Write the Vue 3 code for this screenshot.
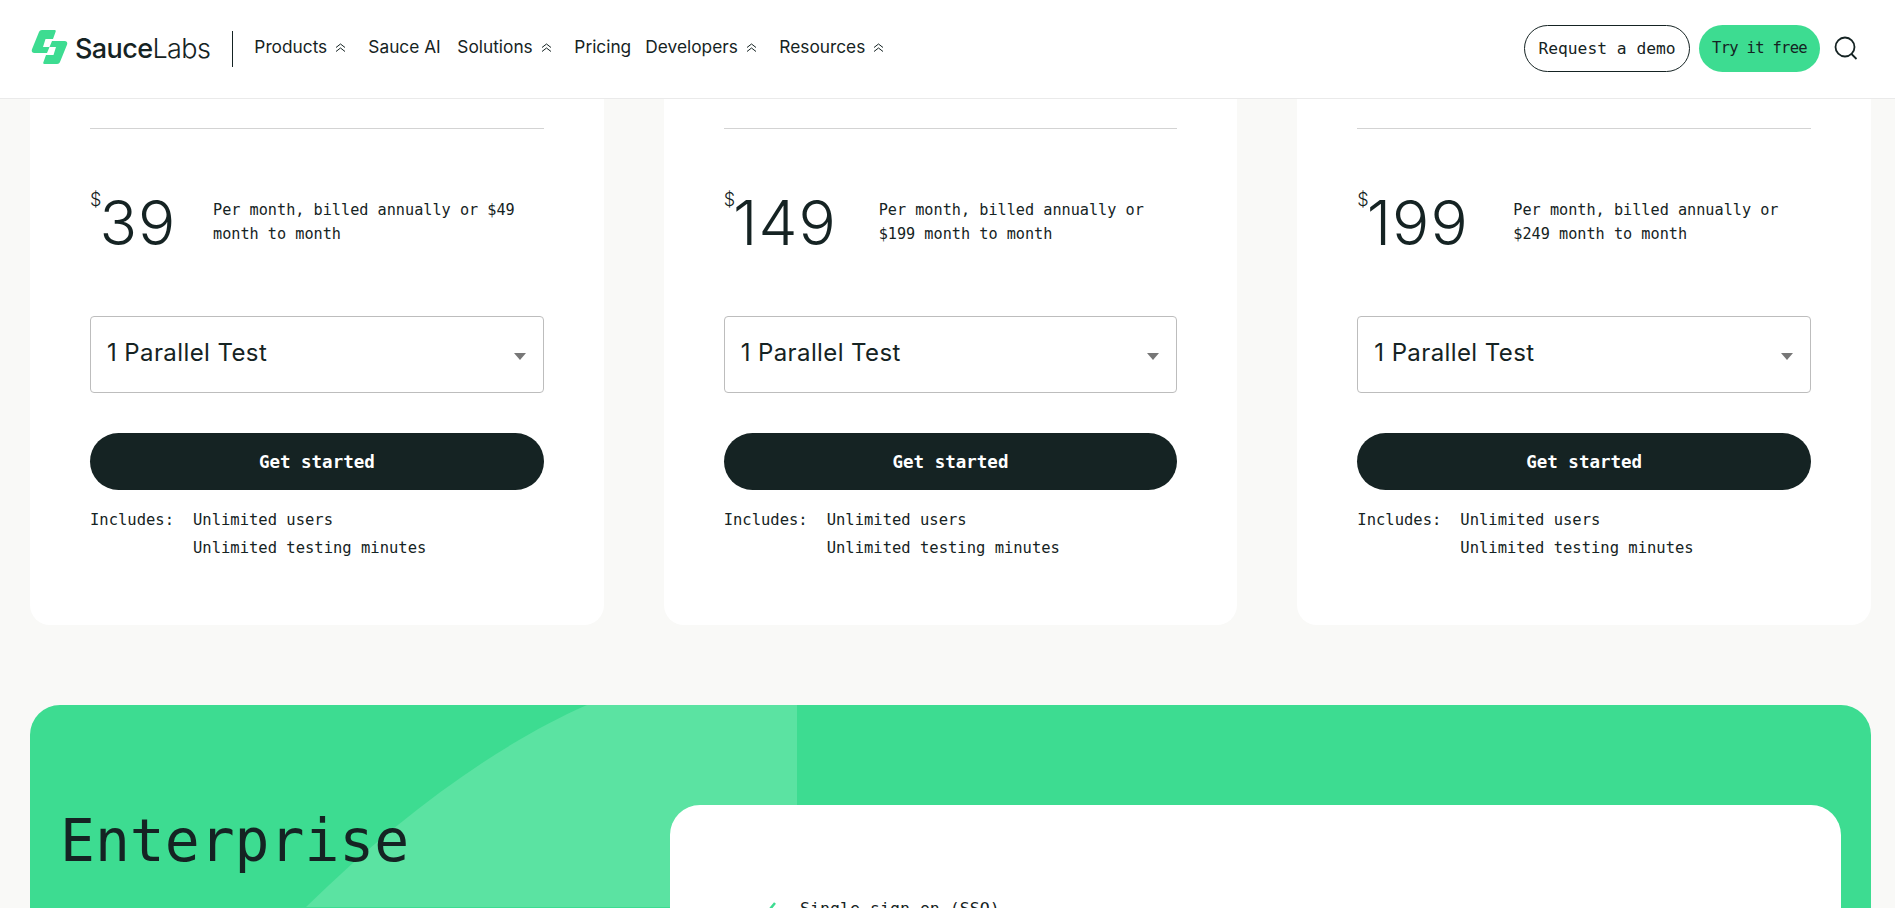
<template>
  <div class="page">
    <header class="topbar">
      <div class="brand">
        <svg class="logo" width="37" height="36" viewBox="0 0 36 36">
          <path d="M10.500 1H23c1 0 1.500.6 1.200 1.500L21.500 10H14l-2.500 8H18l-2.500 6H3C.8 24-.3 22.500.4 20.500L7.500 3C8 1.800 9 1 10.500 1z" fill="#3ddc91"/>
          <path d="M25.500 35H13c-1 0-1.500-.6-1.200-1.500L14.500 26H22l2.500-8H18l2.500-6H33c2.200 0 3.300 1.500 2.600 3.500L28.500 33c-.5 1.200-1.500 2-3 2z" fill="#3ddc91"/>
        </svg>
        <span class="wordmark"><b>Sauce</b>Labs</span>
      </div>
      <nav class="nav">
        <a v-for="item in navItems" :key="item.label" class="nav-item" :class="item.cls">
          {{ item.label }}
          <svg v-if="item.menu" width="11" height="11" viewBox="0 0 11 11" fill="none" stroke="#152323" stroke-width="1">
            <path d="M1 5.500 5.500 2 10 5.500M1 9.500 5.500 6l4.500 3.500"/>
          </svg>
        </a>
      </nav>
      <div class="actions">
        <a class="pill outline">Request a demo</a>
        <a class="pill green">Try it free</a>
        <svg class="search" width="24" height="24" viewBox="0 0 24 24" fill="none" stroke="#152323" stroke-width="1.800">
          <circle cx="11" cy="11" r="9.500"/>
          <path d="m17.500 18 5 5"/>
        </svg>
      </div>
    </header>

    <main class="content">
      <section class="plans">
        <article v-for="plan in plans" :key="plan.price" class="plan">
          <div class="rule"></div>
          <div class="price-row">
            <div class="price" :style="{ width: plan.priceWidth + 'px' }"><sup>$</sup><span>{{ plan.price }}</span></div>
            <p>{{ plan.note }}</p>
          </div>
          <div class="select">
            <span>1 Parallel Test</span>
            <i class="caret"></i>
          </div>
          <button class="start">Get started</button>
          <div class="includes">
            <span>Includes:</span>
            <ul>
              <li>Unlimited users</li>
              <li>Unlimited testing minutes</li>
            </ul>
          </div>
        </article>
      </section>

      <section class="enterprise">
        <svg class="swoosh" width="768" height="202" viewBox="0 0 768 202">
          <path d="M557 0C470 38 370 110 276 202H767V0z" fill="#5be3a2"/>
        </svg>
        <h2>Enterprise</h2>
        <div class="ent-card">
          <div class="ent-line">
            <svg width="18" height="18" viewBox="0 0 18 18" fill="none" stroke="#3ddc91" stroke-width="2.500"><path d="m2 9 5 5 9-11"/></svg>
            Single sign-on (SSO)
          </div>
        </div>
      </section>
    </main>
  </div>
</template>

<script setup>
const navItems = [
  { label: 'Products', menu: true, cls: 'w-products' },
  { label: 'Sauce AI', menu: false, cls: 'w-ai' },
  { label: 'Solutions', menu: true, cls: 'w-solutions' },
  { label: 'Pricing', menu: false, cls: 'w-pricing' },
  { label: 'Developers', menu: true, cls: 'w-developers' },
  { label: 'Resources', menu: true, cls: 'w-resources' }
]
const plans = [
  { price: '39', priceWidth: 123, note: 'Per month, billed annually or $49 month to month' },
  { price: '149', priceWidth: 155, note: 'Per month, billed annually or $199 month to month' },
  { price: '199', priceWidth: 156, note: 'Per month, billed annually or $249 month to month' }
]
</script>

<style>
html, body { margin: 0; height: 100%; overflow: hidden; background: #f9f9f7; }
</style>

<style scoped>
.page {
  height: 908px;
  overflow: hidden;
  background: #f9f9f7;
  color: #152323;
  font-family: Inter, "Liberation Sans", sans-serif;
}
.topbar {
  height: 98px;
  background: #fff;
  border-bottom: 1px solid #eaeaea;
  display: flex;
  align-items: center;
  padding: 0 30px 0 31px;
}
.brand {
  display: flex;
  align-items: center;
  gap: 7px;
  height: 36px;
  padding-right: 22px;
  border-right: 1px solid #152323;
  margin-top: -1px;
}
.logo { margin-top: -3px; }
.wordmark { font-size: 27px; font-weight: 300; letter-spacing: -0.6px; }
.wordmark b { font-weight: 500; }
.nav { display: flex; align-items: center; margin-left: 21px; margin-top: -6px; }
.nav-item { font-size: 17.300px; display: flex; align-items: center; gap: 8px; white-space: nowrap; }
.nav-item svg { margin-top: 3px; }
.w-products { width: 114px; }
.w-ai { width: 89px; }
.w-solutions { width: 117px; }
.w-pricing { width: 71px; }
.w-developers { width: 134px; }
.actions { margin-left: auto; display: flex; align-items: center; gap: 9px; margin-top: -2px; }
.pill {
  height: 47px;
  box-sizing: border-box;
  border-radius: 24px;
  display: flex;
  align-items: center;
  justify-content: center;
  font-family: "DejaVu Sans Mono", monospace;
  font-size: 16.300px;
}
.outline { width: 166px; border: 1px solid #152323; }
.green { width: 121px; background: #3ddc91; font-size: 15.500px; letter-spacing: -0.7px; }
.search { margin-left: 5px; margin-right: 7px; }
.content { padding: 0 24px 0 30px; }
.plans { display: grid; grid-template-columns: repeat(3, 1fr); gap: 60px; }
.plan {
  background: #fff;
  border-radius: 0 0 20px 20px;
  padding: 29px 60px 0;
  height: 526px;
  box-sizing: border-box;
}
.rule { border-top: 1px solid #d3d3d3; }
.price-row { display: flex; align-items: flex-start; height: 187px; padding-top: 59px; box-sizing: border-box; }
.price { flex: none; display: flex; align-items: flex-start; font-weight: 300; font-size: 62px; line-height: 70px; }
.price sup { font-size: 18px; line-height: 20px; margin-top: 2px; }
.price span { margin-left: -2px; letter-spacing: 1px; }
.price-row p {
  margin: 10px 0 0;
  font-family: "DejaVu Sans Mono", monospace;
  font-size: 15.200px;
  line-height: 24px;
}
.select {
  height: 77px;
  box-sizing: border-box;
  border: 1px solid #bdbdbd;
  border-radius: 4px;
  display: flex;
  align-items: center;
  justify-content: space-between;
  padding: 0 17px 4px 16px;
  font-size: 24px;
  letter-spacing: 0.4px;
}
.caret {
  width: 0;
  height: 0;
  border-left: 6.500px solid transparent;
  border-right: 6.500px solid transparent;
  border-top: 7px solid #777;
  margin-top: 7px;
}
.start {
  display: block;
  width: 100%;
  height: 57px;
  margin-top: 40px;
  border: 0;
  border-radius: 29px;
  background: #152323;
  color: #fff;
  font-family: "DejaVu Sans Mono", monospace;
  font-weight: 700;
  font-size: 17.500px;
}
.includes {
  display: flex;
  margin-top: 16px;
  font-family: "DejaVu Sans Mono", monospace;
  font-size: 15.500px;
  line-height: 28px;
}
.includes > span { width: 103px; flex: none; }
.includes ul { margin: 0; padding: 0; list-style: none; }
.enterprise {
  position: relative;
  margin-top: 80px;
  height: 400px;
  background: #3ddc91;
  border-radius: 30px 30px 0 0;
  overflow: hidden;
  display: flex;
  justify-content: space-between;
  padding: 100px 30px 0;
}
.swoosh { position: absolute; top: 0; left: 0; }
.enterprise h2 {
  position: relative;
  margin: 0;
  padding-top: 2px;
  font-family: "DejaVu Sans Mono", monospace;
  font-weight: 400;
  font-size: 58px;
  line-height: 68px;
}
.ent-card {
  position: relative;
  width: 1171px;
  height: 300px;
  box-sizing: border-box;
  background: #fff;
  border-radius: 30px 30px 0 0;
  padding: 94px 0 0 89px;
}
.ent-line { display: flex; align-items: center; gap: 23px; font-family: "DejaVu Sans Mono", monospace; font-size: 16.600px; }
</style>
